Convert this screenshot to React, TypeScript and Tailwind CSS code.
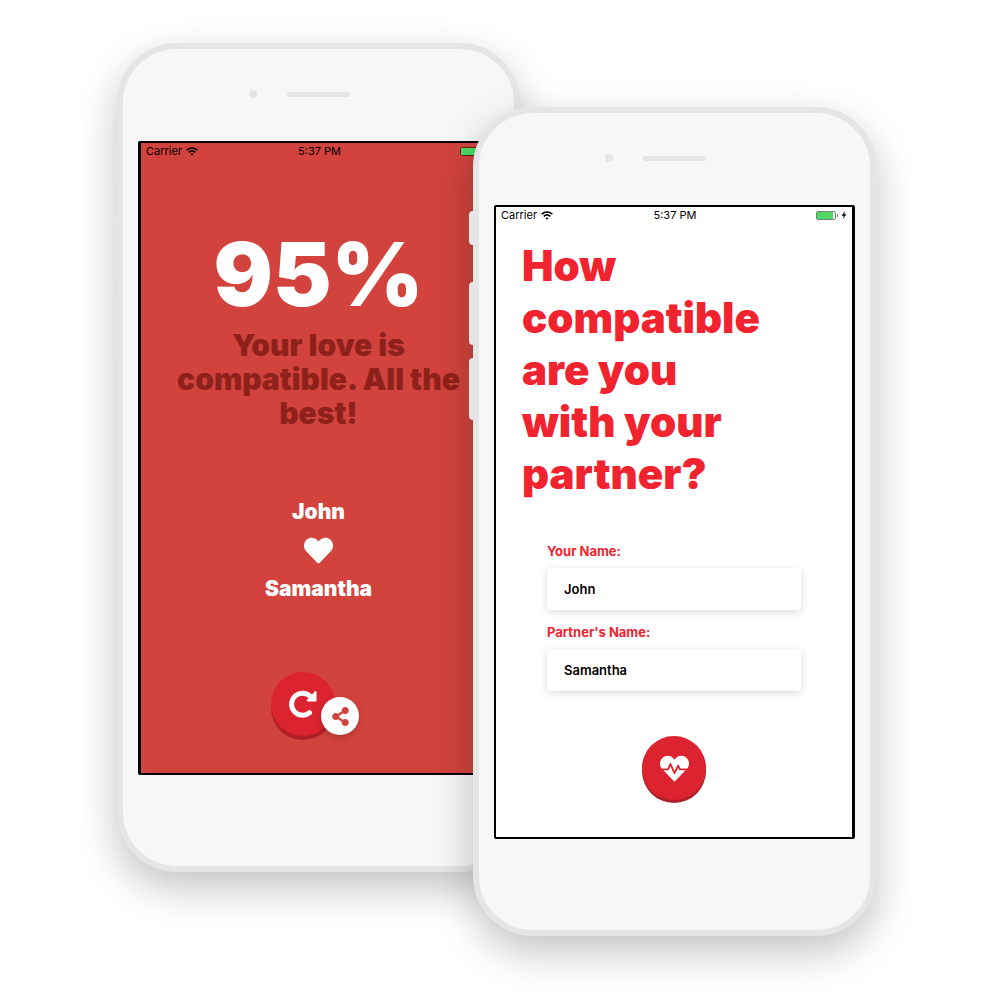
import type { ReactNode } from "react";
import { FaHeart, FaHeartbeat, FaShareAlt } from "react-icons/fa";

function StatusBar() {
  return (
    <div className="grid h-4 grid-cols-3 items-center px-[5px] text-[11px] leading-4 text-black">
      <div className="flex items-center gap-1">
        <span>Carrier</span>
        <svg viewBox="0 0 24 18" className="h-[9px] w-3" fill="none" stroke="currentColor" strokeWidth="3.2">
          <path d="M1.5 6.2C7.5.6 16.5.6 22.5 6.2" />
          <path d="M5.5 10.700C9.300 7.300 14.700 7.300 18.500 10.700" />
          <path d="M12 17.500 8.700 14C10.500 12.500 13.500 12.500 15.300 14Z" fill="currentColor" stroke="none" />
        </svg>
      </div>
      <span className="pl-[2px] text-center">5:37 PM</span>
      <div className="flex items-center justify-end gap-px">
        <div className="h-[9px] w-5 rounded-[2px] border border-black/50">
          <div className="h-full w-4 bg-[#4cd964]" />
        </div>
        <div className="h-[3px] w-px bg-black/50" />
        <svg viewBox="0 0 8 12" className="ml-0.5 h-2 w-[6px]" fill="currentColor">
          <path d="M5.500 0 .5 7H3.500L2.500 12 7.500 5H4.500Z" />
        </svg>
      </div>
    </div>
  );
}

function RedoIcon() {
  return (
    <svg viewBox="0 0 28 28" className="size-7" aria-hidden="true">
      <path d="M20.500 22.700A11 11 0 1 1 21.500 6.500" fill="none" stroke="currentColor" strokeWidth="5" strokeLinecap="round" />
      <path d="M27.500 1.800V10.500Q27.500 11.500 26.500 11.500H18.500Q17 11.200 18 10L25.800 1.400Q27.300.2 27.500 1.800Z" fill="currentColor" />
    </svg>
  );
}

function Phone({ className, screenClass, children }: { className: string; screenClass: string; children: ReactNode }) {
  return (
    <section
      className={`relative min-w-0 flex-1 rounded-[60px] border-[6px] border-[#e5e5e5] bg-[#f7f7f7] px-[15px] shadow-[0_16px_40px_rgba(0,0,0,0.24)] ${className}`}
    >
      <div className="absolute top-[98px] -left-[10px] h-[34px] w-1 rounded-l-sm bg-[#e5e5e5]" />
      <div className="absolute top-[169px] -left-[10px] h-[63px] w-1 rounded-l-sm bg-[#e5e5e5]" />
      <div className="absolute top-[245px] -left-[10px] h-[62px] w-1 rounded-l-sm bg-[#e5e5e5]" />
      <div className="absolute top-[169px] -right-[9px] h-[62px] w-[3px] rounded-r-sm bg-[#e5e5e5]" />
      <div className="flex h-[92px] items-center justify-center gap-[30px] pr-[39px] pb-[2px]">
        <span className="size-2 rounded-full bg-[#e5e5e5]" />
        <span className="h-[5px] w-[63px] rounded-full bg-[#e5e5e5]" />
      </div>
      <div className={`rounded-[2px] border-y-2 border-r-[3px] border-black ${screenClass}`}>
        <StatusBar />
        {children}
      </div>
      <div className="h-[91px]" />
    </section>
  );
}

function Field({ id, label, value }: { id: string; label: string; value: string }) {
  return (
    <div>
      <label htmlFor={id} className="block text-[13px] leading-4 font-bold text-[#f0232f]">
        {label}
      </label>
      <input
        id={id}
        defaultValue={value}
        className="mt-[9px] block h-[42px] w-full rounded bg-white px-[17px] text-[13px] font-semibold text-black shadow-[0_2px_8px_rgba(0,0,0,0.15)] outline-none"
      />
    </div>
  );
}

export default function App() {
  return (
    <main className="min-h-screen bg-white pr-[7px] pb-16 font-['Inter',sans-serif]">
      <div className="mx-auto flex max-w-[759px] items-start">
        <Phone className="mt-[43px]" screenClass="border-l-[3px] bg-[#d1433c]">
          <div className="flex flex-col items-center px-5 pb-[37px] text-center text-white">
            <p className="mt-[67px] text-[88px] leading-[96px] font-black">95%</p>
            <p className="mt-[6px] text-[30px] leading-[34px] font-black whitespace-nowrap text-[#8f211c]">
              Your love is
              <br />
              compatible. All the
              <br />
              best!
            </p>
            <p className="mt-[70px] text-[21px] leading-6 font-black">John</p>
            <FaHeart className="mt-[12px] size-[29px]" />
            <p className="mt-[12px] text-[21px] leading-6 font-black">Samantha</p>
            <div className="relative mt-[71px] mr-[31px]">
              <button
                type="button"
                aria-label="Try again"
                className="flex size-16 items-center justify-center rounded-full bg-[#dc2430] shadow-[0_4px_0_#ae2029]"
              >
                <RedoIcon />
              </button>
              <button
                type="button"
                aria-label="Share"
                className="absolute top-[25px] left-[50px] flex size-[38px] items-center justify-center rounded-full bg-white text-[#d1433c] shadow-[0_2px_6px_rgba(0,0,0,0.2)]"
              >
                <FaShareAlt className="size-[19px]" />
              </button>
            </div>
          </div>
        </Phone>
        <Phone className="mt-[107px] -ml-[47px]" screenClass="border-l-2 bg-white">
          <form className="px-[26px] pb-[37px]" onSubmit={(e) => e.preventDefault()}>
            <h1 className="mt-[17px] text-[42px] leading-[52px] font-black whitespace-nowrap text-[#f0232f]">
              How
              <br />
              compatible
              <br />
              are you
              <br />
              with your
              <br />
              partner?
            </h1>
            <div className="mt-[43px] flex flex-col gap-[14px] px-[25px]">
              <Field id="your-name" label="Your Name:" value="John" />
              <Field id="partner-name" label="Partner's Name:" value="Samantha" />
            </div>
            <button
              type="submit"
              aria-label="Check compatibility"
              className="mx-auto mt-[45px] flex size-16 items-center justify-center rounded-full bg-[#dc2430] text-white shadow-[0_3px_0_#ae2029]"
            >
              <FaHeartbeat className="size-[29px]" />
            </button>
          </form>
        </Phone>
      </div>
    </main>
  );
}
